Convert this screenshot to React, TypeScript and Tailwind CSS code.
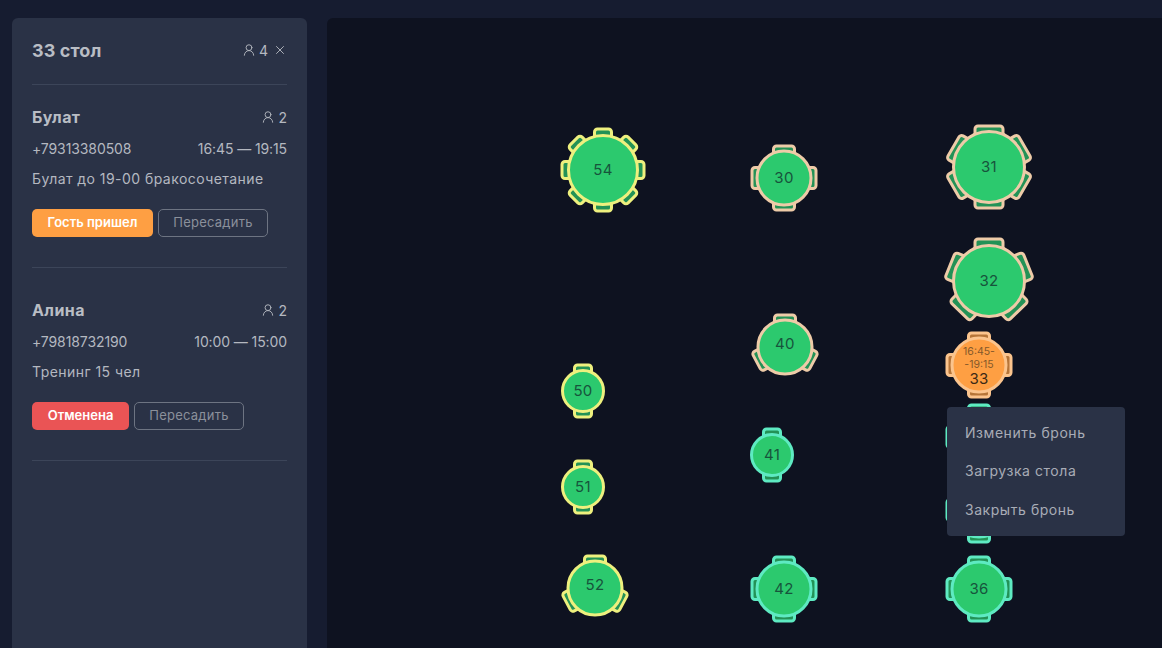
import { UserRound, X } from "lucide-react";

const GREEN = "#2cc96e";
const ORANGE = "#fe9f43";
const YELLOW = "#eef07e";
const PEACH = "#eecba8";
const TEAL = "#5eeac2";
const APRICOT = "#fbc48d";

type TableProps = {
  id: number;
  x: number;
  y: number;
  r: number;
  seats: number[];
  seatW: number;
  seatR: number;
  color: string;
  fill?: string;
  time?: string[];
  hideLabel?: boolean;
  textUp?: boolean;
};

const tables: TableProps[] = [
  { id: 54, x: 603, y: 170, r: 34.5, seats: [0, 45, 90, 135, 180, 225, 270, 315], seatW: 17, seatR: 41, color: YELLOW },
  { id: 30, x: 784, y: 178, r: 27, seats: [0, 90, 180, 270], seatW: 21, seatR: 32, color: PEACH },
  { id: 31, x: 989, y: 167, r: 35.5, seats: [0, 60, 120, 180, 240, 300], seatW: 28, seatR: 41, color: PEACH },
  { id: 32, x: 989, y: 281, r: 35.5, seats: [0, 68, 136, 224, 292], seatW: 28, seatR: 42, color: PEACH },
  { id: 40, x: 785, y: 347, r: 27, seats: [0, 118, 242], seatW: 21, seatR: 32, color: PEACH, textUp: true },
  { id: 50, x: 583, y: 391, r: 20.5, seats: [0, 180], seatW: 17, seatR: 26, color: YELLOW },
  { id: 51, x: 583, y: 487, r: 20.5, seats: [0, 180], seatW: 17, seatR: 26, color: YELLOW },
  { id: 52, x: 595, y: 588, r: 27, seats: [0, 118, 242], seatW: 21, seatR: 32, color: YELLOW, textUp: true },
  { id: 41, x: 772, y: 455, r: 20.5, seats: [0, 180], seatW: 17, seatR: 26, color: TEAL },
  { id: 42, x: 784, y: 589, r: 27, seats: [0, 90, 180, 270], seatW: 21, seatR: 32, color: TEAL },
  { id: 34, x: 979, y: 437, r: 27, seats: [0, 90, 180, 270], seatW: 21, seatR: 32, color: TEAL, hideLabel: true },
  { id: 35, x: 979, y: 510, r: 27, seats: [0, 90, 180, 270], seatW: 21, seatR: 32, color: TEAL, hideLabel: true },
  { id: 36, x: 979, y: 589, r: 27, seats: [0, 90, 180, 270], seatW: 21, seatR: 32, color: TEAL },
  { id: 33, x: 979, y: 365, r: 27, seats: [0, 90, 180, 270], seatW: 21, seatR: 32, color: APRICOT, fill: ORANGE, time: ["16:45-", "-19:15"] },
];

function Table({ id, x, y, r, seats, seatW, seatR, color, fill = GREEN, time, hideLabel, textUp }: TableProps) {
  const size = seatR * 2 + 8;
  const c = size / 2;
  return (
    <div
      className="absolute flex flex-col items-center justify-center"
      style={{ left: x - c - 327, top: y - c - 18, width: size, height: size }}
    >
      <svg className="absolute inset-0" width={size} height={size}>
        {seats.map((a) => (
          <g key={a} transform={`rotate(${a} ${c} ${c})`}>
            <rect
              x={c - seatW / 2}
              y={c - seatR}
              width={seatW}
              height={12}
              rx={3}
              fill={fill}
              fillOpacity={0.7}
              stroke={color}
              strokeWidth={3}
            />
          </g>
        ))}
        <circle cx={c} cy={c} r={r} fill={fill} stroke={color} strokeWidth={3} />
      </svg>
      {time && (
        <div className="relative mt-[1px] text-center text-[10.5px] leading-[13px] text-[#85592a]">
          {time.map((t) => (
            <div key={t}>{t}</div>
          ))}
        </div>
      )}
      {!hideLabel && (
        <span
          className={`relative text-[15px] tracking-[0.3px] ${time ? "leading-[15px] text-[#3c2a16]" : "text-[#17543c]"} ${textUp ? "mt-[-6px]" : ""}`}
        >
          {id}
        </span>
      )}
    </div>
  );
}

type BookingProps = {
  name: string;
  guests: number;
  phone: string;
  time: string;
  note: string;
  status: string;
  statusClass: string;
  topClass: string;
};

function Booking({ name, guests, phone, time, note, status, statusClass, topClass }: BookingProps) {
  return (
    <div className={`border-b border-[#3c4559] pb-[30px] text-[#b4b8c0] ${topClass}`}>
      <div className="flex h-[24px] items-center justify-between">
        <span className="text-[16px] font-bold tracking-[0.4px] text-[#b9bdc4]">{name}</span>
        <Guests count={guests} />
      </div>
      <div className="mt-[7px] flex h-[24px] items-center justify-between text-[14px] tracking-[-0.1px]">
        <span>{phone}</span>
        <span>{time}</span>
      </div>
      <div className="mt-[7px] h-[24px] text-[14px] leading-[24px] tracking-[0.45px]">{note}</div>
      <div className="mt-[18px] flex gap-[5px]">
        <button className={`h-[28px] rounded-[5px] text-[13px] font-semibold text-white ${statusClass}`}>{status}</button>
        <button className="h-[28px] w-[110px] rounded-[5px] border border-[#6d7482] text-[13px] tracking-[0.25px] text-[#8b909b]">
          Пересадить
        </button>
      </div>
    </div>
  );
}

function Guests({ count }: { count: number }) {
  return (
    <span className="flex items-center gap-[3px] text-[14px] text-[#b4b8c0]">
      <UserRound size={14} strokeWidth={1.6} />
      {count}
    </span>
  );
}

export default function App() {
  return (
    <div className="flex h-[648px] w-[1162px] gap-[20px] overflow-hidden bg-[#161c30] pt-[18px] pl-[12px] font-['Inter',sans-serif]">
      <aside className="w-[295px] shrink-0 rounded-t-[6px] bg-[#2a3246] px-[20px]">
        <div className="flex h-[67px] items-center justify-between border-b border-[#3c4559] pb-[2px]">
          <span className="text-[18px] font-bold tracking-[0.1px] text-[#b9bdc4]">33 стол</span>
          <div className="flex items-center gap-[5px]">
            <Guests count={4} />
            <X size={14} strokeWidth={1.6} className="text-[#b4b8c0]" />
          </div>
        </div>
        <Booking
          name="Булат"
          guests={2}
          phone="+79313380508"
          time="16:45 — 19:15"
          note="Булат до 19-00 бракосочетание"
          status="Гость пришел"
          statusClass="w-[121px] bg-[#fe9f43]"
          topClass="pt-[20px]"
        />
        <Booking
          name="Алина"
          guests={2}
          phone="+79818732190"
          time="10:00 — 15:00"
          note="Тренинг 15 чел"
          status="Отменена"
          statusClass="w-[97px] bg-[#ea5455]"
          topClass="pt-[30px]"
        />
      </aside>
      <main className="relative flex-1 rounded-tl-[6px] bg-[#0e1220]">
        {tables.map((t) => (
          <Table key={t.id} {...t} />
        ))}
        <div className="absolute top-[389px] left-[620px] flex h-[129px] w-[178px] flex-col rounded-[4px] bg-[#2a3246] pt-[6px] pl-[18px] text-[14px] tracking-[0.55px] text-[#a8acb6]">
          <div className="flex h-[38px] items-center">Изменить бронь</div>
          <div className="flex h-[39px] items-center">Загрузка стола</div>
          <div className="flex h-[39px] items-center">Закрыть бронь</div>
        </div>
      </main>
    </div>
  );
}
